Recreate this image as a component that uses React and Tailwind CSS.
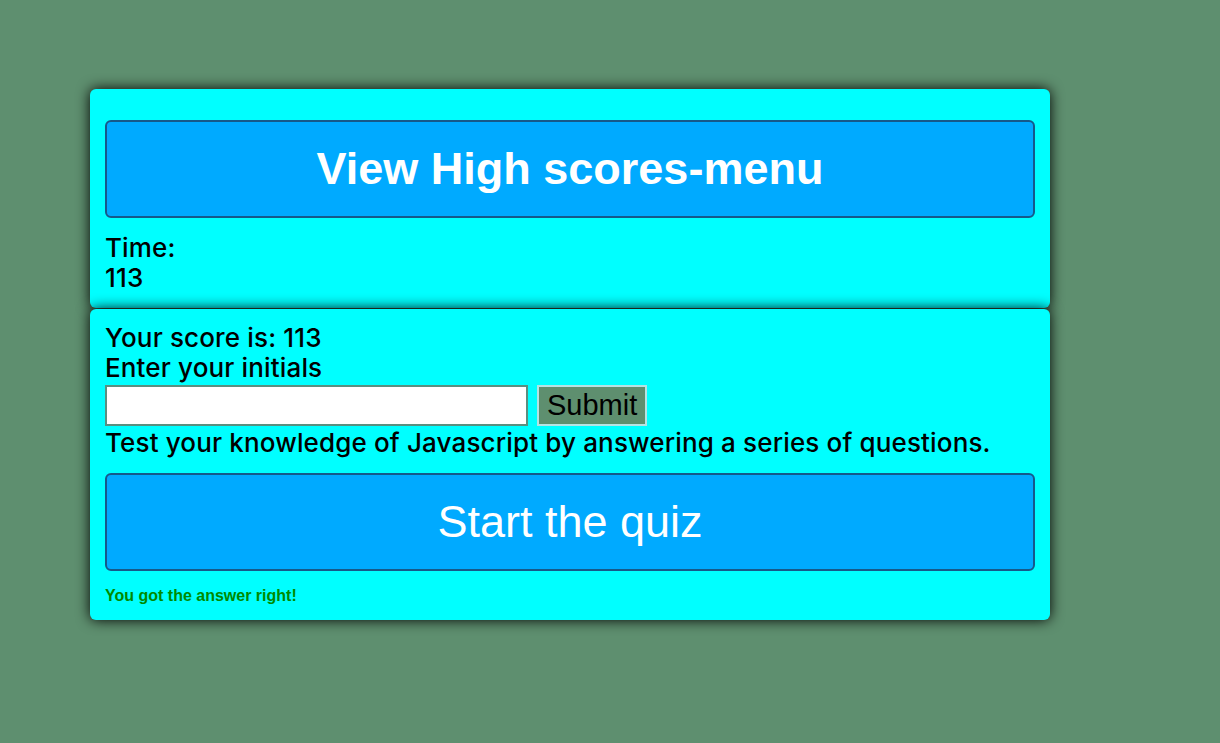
export default function App() {
  const body = { fontFamily: 'Inter, "Liberation Sans", Arial, sans-serif' }
  const arial = { fontFamily: '"Liberation Sans", Arial, sans-serif' }

  return (
    <div className="min-h-[743px] bg-[#5e8f6f] pl-[90px] pt-[89px]" style={body}>
      <div className="w-[960px]">
        <div className="rounded-md bg-[#00ffff] px-[15px] pb-[15px] pt-[31px] shadow-[0_0_14px_#000]">
          <button
            className="flex h-[98px] w-full items-center justify-center rounded-md border-2 border-[#16598a] bg-[#00aaff] text-[45px] font-bold text-white"
            style={arial}
          >
            View High scores-menu
          </button>
          <div className="mt-[15px] text-[26px] font-medium leading-[30px] tracking-[0.15px] text-black">
            <div>Time:</div>
            <div>113</div>
          </div>
        </div>

        <div className="relative mt-px rounded-md bg-[#00ffff] px-[15px] pb-[14px] pt-[14px] shadow-[0_0_14px_#000]">
          <div className="text-[26px] font-medium leading-[30px] tracking-[0.15px] text-black">
            <div>Your score is: 113</div>
            <div>Enter your initials</div>
          </div>
          <div className="mt-[2px] flex items-center gap-[9px]">
            <input className="h-[41px] w-[423px] border-2 border-[#5a8f80] bg-white px-1 text-[22px] outline-none" />
            <button
              className="h-[41px] border-2 border-[#b5e3e3] bg-[#5e8f6f] px-[8px] text-[29px] leading-none text-black"
              style={arial}
            >
              Submit
            </button>
          </div>
          <div className="mt-[2px] text-[26px] font-medium leading-[30px] tracking-[0.15px] text-black">
            Test your knowledge of Javascript by answering a series of questions.
          </div>
          <button
            className="mt-[15px] flex h-[98px] w-full items-center justify-center rounded-md border-2 border-[#16598a] bg-[#00aaff] text-[45px] text-white"
            style={arial}
          >
            Start the quiz
          </button>
          <div className="mt-[15px] text-[16px] font-bold leading-[20px] text-[#008a00]" style={arial}>
            You got the answer right!
          </div>
        </div>
      </div>
    </div>
  )
}
